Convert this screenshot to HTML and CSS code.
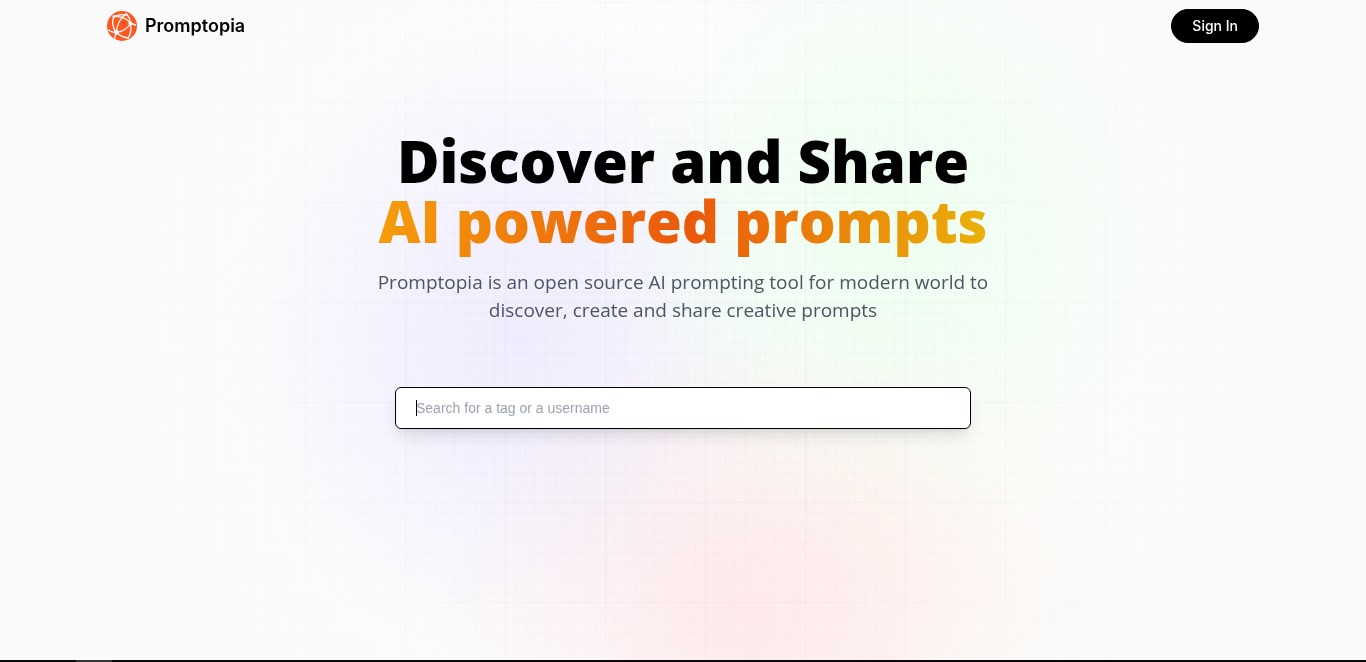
FILE: index.html
```html
<!DOCTYPE html>
<html lang="en">
<head>
<meta charset="utf-8">
<meta name="viewport" content="width=device-width, initial-scale=1">
<title>Promptopia</title>
<link rel="stylesheet" href="styles.css">
</head>
<body>
<div class="backdrop" aria-hidden="true"><div class="glow"></div><div class="grid"></div></div>
<div class="page">
  <header class="nav">
    <a class="brand" href="#">
      <svg class="logo" viewBox="0 0 30 30" aria-hidden="true">
        <circle cx="15" cy="15" r="15" fill="#ff5722"/>
        <g fill="none" stroke="#fff" stroke-width="1.3">
          <path d="M7 5.500Q13 3 20 4"/>
          <path d="M7 5.500Q18 5 23.500 12.500"/>
          <path d="M7 5.500Q3 13 9.500 21.500"/>
          <path d="M20 2Q10 9 9.500 21.500"/>
          <path d="M20 3.500Q23 7 23.500 12.500Q25 21 21 27.500"/>
          <path d="M23.500 12.500Q19 20 9.500 21.500Q5 21.500 1 19"/>
          <path d="M9.500 21.500Q14 26 21 27"/>
          <path d="M9.500 21.500Q7.500 25 8 28"/>
          <path d="M23.500 12.500L29 14"/>
        </g>
        <g fill="#fff"><circle cx="7" cy="5.500" r="1.500"/><circle cx="23.500" cy="12.500" r="2"/><circle cx="9.500" cy="21.500" r="2.200"/></g>
      </svg>
      <span>Promptopia</span>
    </a>
    <button class="signin" type="button">Sign In</button>
  </header>
  <main class="hero">
    <h1 class="title">Discover and Share<br><span class="accent">AI powered prompts</span></h1>
    <p class="desc">Promptopia is an open source AI prompting tool for modern world to discover, create and share creative prompts</p>
    <form class="search">
      <input class="field" type="text" aria-label="Search prompts" placeholder="Search for a tag or a username">
      <span class="caret"></span>
    </form>
  </main>
  <footer class="bar"><div class="bar-tab"></div></footer>
</div>
</body>
</html>
```
FILE: styles.css
```css
* { box-sizing: border-box; margin: 0; }
body { background: #fafafa; font-family: "Open Sans", "Noto Sans", sans-serif; }
.backdrop { position: fixed; inset: 0; z-index: -1; }
.glow, .grid { position: absolute; inset: 0; }
.glow {
  background:
    radial-gradient(ellipse 300px 270px at 54% 92%, rgba(255, 226, 228, .7), rgba(255, 228, 230, .35) 50%, rgba(255, 224, 226, 0)),
    radial-gradient(ellipse 280px 260px at 64% 84%, rgba(255, 242, 230, .45), rgba(255, 240, 225, 0)),
    radial-gradient(ellipse 290px 330px at 65% 36%, rgba(236, 255, 238, .85), rgba(236, 255, 238, .5) 50%, rgba(236, 255, 238, 0)),
    radial-gradient(ellipse 290px 330px at 38% 51%, rgba(236, 231, 255, .75), rgba(236, 231, 255, .45) 50%, rgba(236, 231, 255, 0)),
    radial-gradient(ellipse 560px 500px at 50% 50%, #fdfdfd 60%, #fafafa);
}
.grid {
  background-image:
    linear-gradient(to right, rgba(40, 40, 80, .02) 1px, transparent 1px),
    linear-gradient(to bottom, rgba(40, 40, 80, .02) 1px, transparent 1px),
    linear-gradient(to right, rgba(40, 40, 80, .014) 1px, transparent 1px),
    linear-gradient(to bottom, rgba(40, 40, 80, .014) 1px, transparent 1px);
  background-size: 100px 100px, 100px 100px, 10px 10px, 10px 10px;
  background-position: 5px 2px;
  mask-image: radial-gradient(ellipse 50% 95% at 50% 50%, #000 30%, transparent);
}
.page { min-height: 100vh; display: flex; flex-direction: column; }
.nav {
  width: 100%; max-width: 1200px; margin: 0 auto; padding: 9px 24px 0;
  display: flex; align-items: center; justify-content: space-between;
}
.brand {
  display: flex; align-items: center; gap: 8px; color: #000; text-decoration: none;
  font: 600 18px/28px Inter, sans-serif;
}
.logo { width: 30px; height: 30px; }
.signin {
  height: 34px; padding: 0 20px; border: 1px solid #000; border-radius: 17px;
  background: #000; color: #fff; font: 500 14px/20px Inter, sans-serif;
}
.hero { flex: 1; display: flex; flex-direction: column; align-items: center; padding: 88px 24px 0; }
.title { font-size: 58px; line-height: 60px; font-weight: 800; text-align: center; color: #000; }
.accent {
  background: linear-gradient(98deg, #f59e0b, #ea580c 51%, #eab308);
  background-clip: text; -webkit-background-clip: text; color: transparent;
}
.desc { max-width: 672px; margin-top: 17px; font-size: 19px; line-height: 28px; color: #4b5563; text-align: center; }
.search { position: relative; width: 100%; max-width: 576px; margin-top: 63px; }
.field {
  display: block; width: 100%; height: 42px; padding: 0 20px;
  border: 1px solid #000; border-radius: 6px; background: #fff; outline: 0;
  box-shadow: 0 10px 15px -3px rgba(0, 0, 0, .1), 0 4px 6px -4px rgba(0, 0, 0, .1);
  font: 14px/20px "Liberation Sans", Arial, sans-serif; color: #000;
}
.field::placeholder { color: #9ca3af; opacity: 1; }
.caret { position: absolute; left: 21px; top: 13px; width: 1px; height: 16px; background: #000; }
.bar { height: 2px; padding-left: 76px; background: #09070b; }
.bar-tab { width: 36px; height: 2px; background: #353338; }
```
